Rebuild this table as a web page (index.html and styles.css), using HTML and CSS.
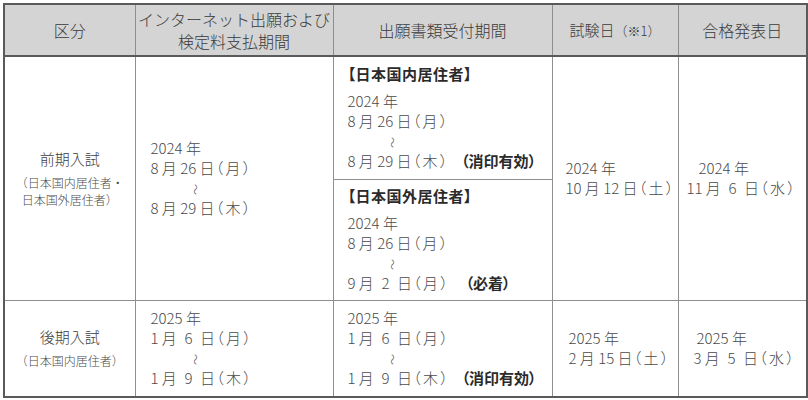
FILE: index.html
```html
<!DOCTYPE html>
<html lang="ja">
<head>
<meta charset="utf-8">
<title>出願スケジュール</title>
<link rel="stylesheet" href="styles.css">
</head>
<body>
<div class="page">
<table class="sched">
  <colgroup>
    <col class="c1"><col class="c2"><col class="c3"><col class="c4"><col class="c5">
  </colgroup>
  <thead>
    <tr class="head">
      <th>区分</th>
      <th>インターネット出願および<br>検定料支払期間</th>
      <th>出願書類受付期間</th>
      <th><span class="h-exam">試験日</span><span class="h-note">（※1）</span></th>
      <th>合格発表日</th>
    </tr>
  </thead>
  <tbody>
    <tr class="r1a">
      <td rowspan="2" class="cat">
        <div class="cat-name">前期入試</div>
        <div class="cat-sub">（日本国内居住者・<br>日本国外居住者）</div>
      </td>
      <td rowspan="2" class="period">
        <div class="ln">2024 年</div>
        <div class="ln">8 月 26 日<span class="dow">（月）</span></div>
        <div class="ln wave"><span>〜</span></div>
        <div class="ln">8 月 29 日<span class="dow">（木）</span></div>
      </td>
      <td class="docs">
        <div class="docs-head">【日本国内居住者】</div>
        <div class="ln">2024 年</div>
        <div class="ln">8 月 26 日<span class="dow">（月）</span></div>
        <div class="ln wave"><span>〜</span></div>
        <div class="ln">8 月 29 日<span class="dow">（木）</span><b class="mark">（消印有効）</b></div>
      </td>
      <td rowspan="2" class="exam">
        <div class="ln">2024 年</div>
        <div class="ln">10 月 12 日<span class="dow">（土）</span></div>
      </td>
      <td rowspan="2" class="result result-1">
        <div class="ln first">2024 年</div>
        <div class="ln">11 月 <span class="dd">6</span> 日<span class="dow">（水）</span></div>
      </td>
    </tr>
    <tr class="r1b">
      <td class="docs">
        <div class="docs-head">【日本国外居住者】</div>
        <div class="ln">2024 年</div>
        <div class="ln">8 月 26 日<span class="dow">（月）</span></div>
        <div class="ln wave"><span>〜</span></div>
        <div class="ln">9 月 <span class="dd">2</span> 日<span class="dow">（月）</span><b class="mark wide">（必着）</b></div>
      </td>
    </tr>
    <tr class="r2">
      <td class="cat">
        <div class="cat-name">後期入試</div>
        <div class="cat-sub">（日本国内居住者）</div>
      </td>
      <td class="period">
        <div class="ln">2025 年</div>
        <div class="ln"><span class="d1">1</span> 月 <span class="dd">6</span> 日<span class="dow">（月）</span></div>
        <div class="ln wave"><span>〜</span></div>
        <div class="ln"><span class="d1">1</span> 月 <span class="dd">9</span> 日<span class="dow">（木）</span></div>
      </td>
      <td class="docs">
        <div class="ln">2025 年</div>
        <div class="ln"><span class="d1">1</span> 月 <span class="dd">6</span> 日<span class="dow">（月）</span></div>
        <div class="ln wave"><span>〜</span></div>
        <div class="ln"><span class="d1">1</span> 月 <span class="dd">9</span> 日<span class="dow">（木）</span><b class="mark">（消印有効）</b></div>
      </td>
      <td class="exam exam-2">
        <div class="ln">2025 年</div>
        <div class="ln">2 月 15 日<span class="dow">（土）</span></div>
      </td>
      <td class="result result-2">
        <div class="ln first">2025 年</div>
        <div class="ln">3 月 <span class="dd">5</span> 日<span class="dow">（水）</span></div>
      </td>
    </tr>
  </tbody>
</table>
</div>
</body>
</html>
```

FILE: styles.css
```css
html, body {
  margin: 0;
  padding: 0;
  background: #ffffff;
}

body {
  font-family: "Noto Sans CJK JP", "Noto Sans", sans-serif;
  font-weight: 300;
  color: #4a4a4a;
}

.page {
  padding: 3px 0 0 3px;
}

.sched {
  border-collapse: collapse;
  table-layout: fixed;
  width: 803px;
  border: 2px solid #5a5a5a;
}

.sched col.c1 { width: 131px; }
.sched col.c2 { width: 198px; }
.sched col.c3 { width: 219px; }
.sched col.c4 { width: 126px; }
.sched col.c5 { width: 129px; }

.sched th,
.sched td {
  border: 1px solid #8e8e8e;
  padding: 0;
  vertical-align: middle;
}

.sched thead th {
  background: #d4d4d4;
  font-weight: 300;
  font-size: 16px;
  line-height: 22px;
  color: #3a3a3a;
  text-align: center;
  border-bottom: 2px solid #5a5a5a;
  white-space: nowrap;
}

.h-exam {
  font-size: 15px;
}

.h-note {
  font-size: 13px;
}

.head { height: 52px; }
.r1a { height: 123px; }
.r1b { height: 121px; }
.r2 { height: 97px; }

.ln {
  font-size: 15px;
  line-height: 20px;
  white-space: nowrap;
}

.dow {
  font-feature-settings: "palt";
  letter-spacing: 2.5px;
  margin-left: 1px;
}

.dd {
  display: inline-block;
  width: 1.1em;
  text-align: center;
}

.wave {
  padding-left: 39px;
}

.wave span {
  display: inline-block;
  font-size: 11px;
  line-height: 11px;
  transform: rotate(90deg);
}

.mark {
  font-weight: 700;
  color: #2a2a2a;
  font-feature-settings: "palt";
  margin-left: 11px;
}

.mark.wide {
  margin-left: 15px;
}

.cat {
  text-align: center;
}

.cat-name {
  font-size: 15px;
  line-height: 20px;
  color: #3c3c3c;
}

.cat-sub {
  margin-top: 5px;
  font-size: 12px;
  line-height: 17px;
}

.period {
  padding-left: 15px !important;
}

.docs {
  padding-left: 14px !important;
}

.docs-head {
  font-size: 15px;
  line-height: 20px;
  font-weight: 700;
  color: #2a2a2a;
  font-feature-settings: "palt";
  letter-spacing: 0.5px;
  margin-bottom: 7px;
}

.exam {
  padding-left: 13px !important;
}

.exam-2 {
  padding-left: 16px !important;
}

.result-1 {
  padding-left: 8px !important;
}

.result-1 .first {
  padding-left: 12px;
}

.result-2 {
  padding-left: 15px !important;
}

.result-2 .first {
  padding-left: 3px;
}
```
